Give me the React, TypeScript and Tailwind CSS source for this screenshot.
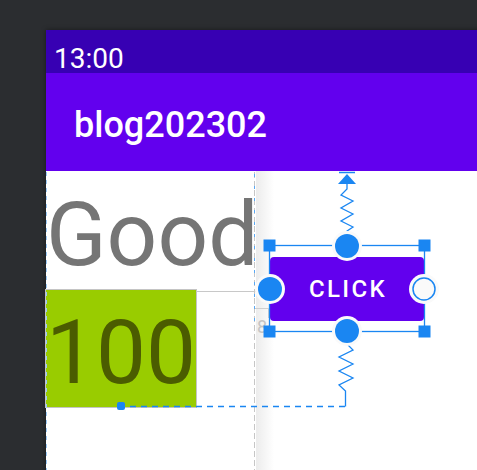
const BLUE = "#1a86f2";

function ConstraintOverlay() {
  return (
    <svg
      className="pointer-events-none absolute left-0 top-0"
      width={477}
      height={470}
      viewBox="0 0 477 470"
    >
      {/* canvas edges */}
      <line x1={46.5} y1={172} x2={46.5} y2={470} stroke="#9ccaf7" strokeDasharray="4 4" />
      <line x1={254.5} y1={172} x2={254.5} y2={470} stroke="#c6c6c6" strokeDasharray="6 3" />
      <line x1={254.5} y1={174} x2={254.5} y2={330} stroke="#5aa8f3" strokeDasharray="3 9" />
      <line x1={196} y1={291.5} x2={259} y2={291.5} stroke="#c8c8c8" />
      <path d="M255 308.5 H268.5 V318" fill="none" stroke="#cfcfcf" />

      {/* top constraint */}
      <line x1={339} y1={172.5} x2={355} y2={172.5} stroke={BLUE} strokeWidth={1.5} />
      <polygon points="347,174 356,184 338,184" fill={BLUE} />
      <path
        d="M347 184 V189 L341 195 L353 201 L341 208 L353 214 L341 221 L353 227 L347 231 V234"
        fill="none"
        stroke={BLUE}
        strokeWidth={1.3}
      />

      {/* bottom constraint */}
      <path
        d="M346 343 L353 350 L339 357 L353 364 L339 371 L353 378 L339 385 L345.5 391 V406.5"
        fill="none"
        stroke={BLUE}
        strokeWidth={1.3}
      />
      <line
        x1={345}
        y1={406.5}
        x2={124}
        y2={406.5}
        stroke={BLUE}
        strokeWidth={1.3}
        strokeDasharray="6 5"
      />
      <rect x={117} y={402} width={8} height={8} rx={2} fill={BLUE} />

      {/* selection frame */}
      <rect x={269.5} y={245.5} width={155} height={86} fill="none" stroke={BLUE} strokeWidth={1.3} />
      {[
        [263.5, 239.5],
        [418.5, 239.5],
        [263.5, 325.5],
        [418.5, 325.5],
      ].map(([x, y]) => (
        <rect key={`${x}-${y}`} x={x} y={y} width={12} height={12} fill={BLUE} />
      ))}
      {[
        [347, 246],
        [347, 331],
        [270, 289],
      ].map(([cx, cy]) => (
        <g key={`${cx}-${cy}`}>
          <circle cx={cx} cy={cy} r={15} fill="#fafafa" />
          <circle cx={cx} cy={cy} r={12} fill={BLUE} />
        </g>
      ))}
      <circle cx={424} cy={289} r={15} fill="#fafafa" />
      <circle cx={424} cy={289} r={11} fill="#fafafa" stroke={BLUE} strokeWidth={1.5} />
    </svg>
  );
}

export default function App() {
  return (
    <div className="relative h-[470px] w-[477px] overflow-hidden bg-[#2b2d30] pl-[46px] pt-[30px] font-['Roboto',sans-serif]">
      <div className="h-[460px] w-[460px] bg-white shadow-[0_0_5px_rgba(0,0,0,0.45)]">
        {/* status bar */}
        <div className="h-[43px] bg-[#3700b3] pl-[8px] pt-[15px] text-[28px] leading-none text-white">
          13:00
        </div>

        {/* app bar */}
        <div className="h-[98px] bg-[#6200ee] pl-[28px] pt-[34px] text-[36px] font-medium leading-none text-white">
          blog202302
        </div>

        {/* layout canvas */}
        <div className="relative h-[299px]">
          <div className="absolute left-[210px] top-0 h-full w-[18px] bg-gradient-to-r from-[#ececec] to-white" />

          <div className="relative h-[119px] w-[209px] pt-[19px] text-[89px] leading-none text-[#757575]">
            Good
          </div>
          <div className="relative h-[117px] w-[150px] bg-[#99cc00] pt-[18px] text-[89px] leading-none text-[#4b5c00] outline outline-1 outline-[#c4c4c4]">
            100
          </div>

          <span className="absolute left-[211px] top-[147px] text-[18px] leading-none text-[#c4c4c4]">
            8
          </span>

          <button className="absolute left-[224px] top-[86px] flex h-[64px] w-[154px] items-center justify-center rounded-[4px] bg-[#6200ee] pl-[2px] text-[24px] font-medium tracking-[2.3px] text-white">
            CLICK
          </button>
        </div>
      </div>

      <ConstraintOverlay />
    </div>
  );
}
